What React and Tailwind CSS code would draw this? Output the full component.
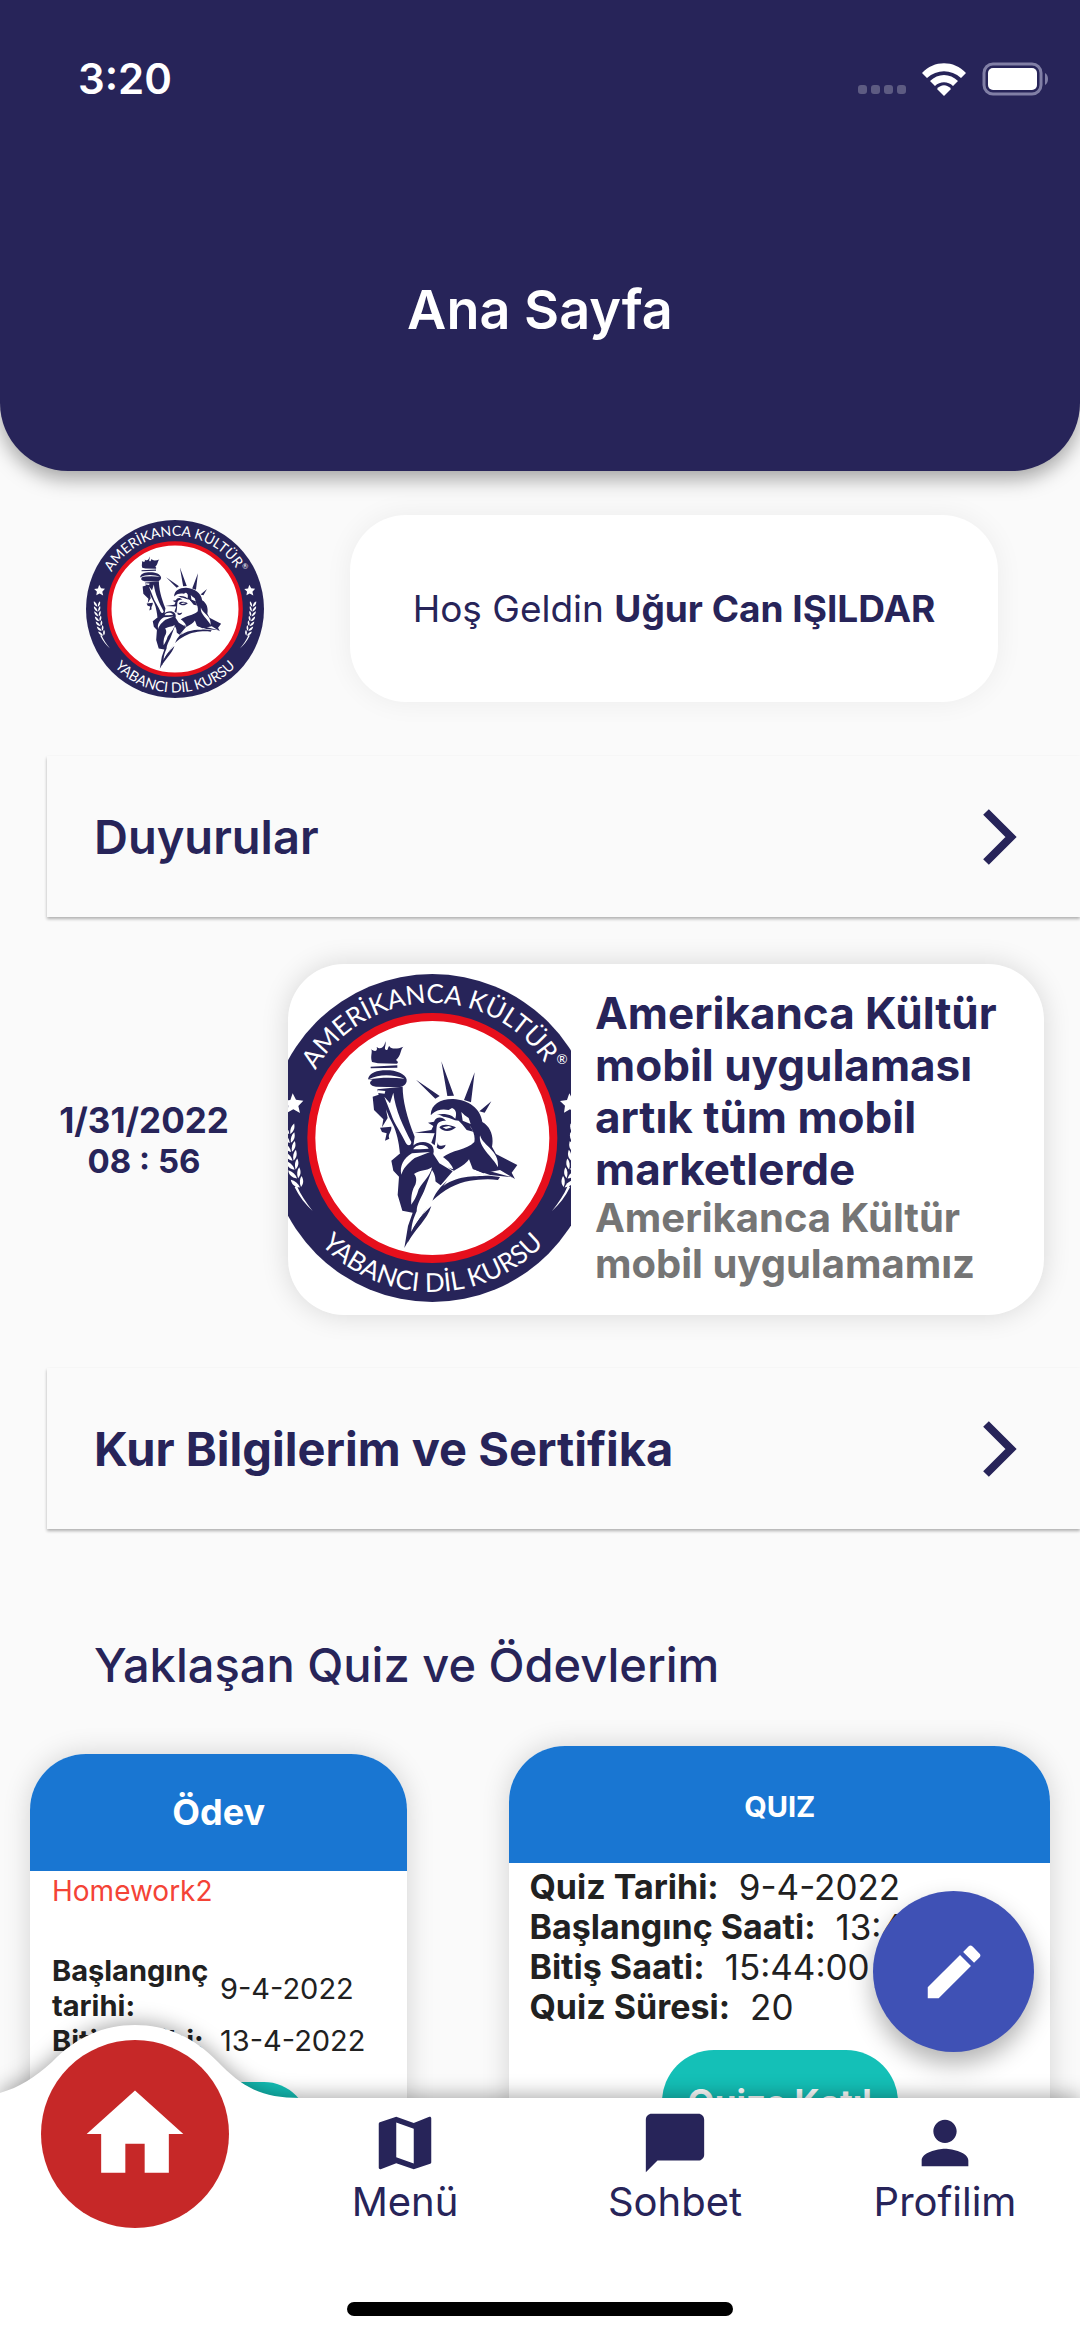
import React from 'react';
import { MdHome, MdMap, MdChatBubble, MdPerson, MdEdit } from 'react-icons/md';

const NAVY = '#272459';

const homework = {
  title: 'Homework2',
  rows: [
    { label: 'Başlangınç tarihi:', value: '9-4-2022' },
    { label: 'Bitiş tarihi:', value: '13-4-2022' },
  ],
};

const quizRows = [
  { label: 'Quiz Tarihi:', value: '9-4-2022' },
  { label: 'Başlangınç Saati:', value: '13:44:00' },
  { label: 'Bitiş Saati:', value: '15:44:00' },
  { label: 'Quiz Süresi:', value: '20' },
];

const navItems = [
  { label: 'Menü', Icon: MdMap },
  { label: 'Sohbet', Icon: MdChatBubble },
  { label: 'Profilim', Icon: MdPerson },
];

function Wheat() {
  return (
    <g fill="#fff">
      {[0, 1, 2, 3, 4, 5, 6].map(i => (
        <g key={i} transform={`translate(${56 + i * i * 0.7} ${528 + i * 27}) rotate(${-4 - i * 3})`}>
          <path d="M0 24 C-16 16 -20 4 -17 -8 C-7 0 0 10 0 24Z" />
          <path d="M3 24 C3 10 8 0 17 -6 C19 8 14 18 3 24Z" />
        </g>
      ))}
      <path d="M80 706 C92 735 108 758 128 783 C106 764 88 740 74 712Z" />
    </g>
  );
}

function Emblem({ id, viewBox, className }) {
  return (
    <svg viewBox={viewBox} preserveAspectRatio="xMidYMid slice" className={className} role="img" aria-label="Amerikanca Kültür">
      <defs>
        <path id={`${id}-top`} d="M82 564 A405 405 0 0 1 892 564" />
        <path id={`${id}-bottom`} d="M25 564 A462 462 0 0 0 949 564" />
      </defs>
      <circle cx="487" cy="564" r="492" fill={NAVY} />
      <circle cx="487" cy="564" r="363" fill="#fff" stroke="#e60f1c" strokeWidth="24" />

      <g fill="#fff" fontFamily="Lato, sans-serif" textAnchor="middle">
        <text fontSize="78">
          <textPath href={`#${id}-top`} startOffset="49%">AMERİKANCA KÜLTÜR</textPath>
        </text>
        <text fontSize="78">
          <textPath href={`#${id}-bottom`} startOffset="50%">YABANCI DİL KURSU</textPath>
        </text>
        <text x="876" y="342" fontSize="40">®</text>
      </g>

      {[72, 902].map(x => (
        <path key={x} transform={`translate(${x} 460)`} fill="#fff" d="M-4 -30 L6 -11 L28 -8 L13 8 L18 29 L-2 18 L-20 28 L-17 7 L-32 -7 L-11 -10Z" />
      ))}
      <Wheat />
      <g transform="translate(974 0) scale(-1 1)"><Wheat /></g>

      {/* torch */}
      <g fill={NAVY}>
        <path d="M306 336 C300 318 308 308 304 298 C314 306 324 304 320 290 C332 302 344 290 346 274 C350 286 340 296 348 300 C356 302 352 292 358 288 C362 298 382 298 400 290 C390 300 394 316 378 330 C386 336 384 340 380 341 L324 340 L306 336Z" />
        <path d="M302 350 L382 346 L382 353 L302 355Z" />
        <path d="M294 388 C298 364 330 359 360 361 C390 364 413 378 410 394 C408 405 397 411 386 412 L318 410 C300 408 294 396 308 389Z" />
        <path d="M308 440 L326 434 L322 418 L398 410 C398 450 410 500 434 560 L428 602 L390 612 C388 590 384 560 372 530 C362 510 356 500 348 478 L353 504 L336 532 L340 508 L312 480Z" />
        <path d="M330 533 L364 530 C366 545 352 552 358 566 L345 572 L350 550 L336 546Z" />
      </g>
      <g fill="#fff">
        <path d="M296 388 C330 370 372 374 404 386 C370 382 330 382 296 388Z" />
        <path d="M343 440 L360 460 L370 428 C376 480 400 530 424 576 C424 586 414 590 408 580 C395 550 372 520 364 494Z" />
        <path d="M324 421 L346 423 L344 431 L324 429Z" />
      </g>

      {/* crown rays */}
      <path fill={NAVY} d="M438 389 L509 438 L496 446Z M514 334 L552 437 L532 438Z M614 367 L603 457 L582 450Z M664 454 L644 488 L628 484Z" />

      {/* head and hair */}
      <path fill={NAVY} d="M482 494 C484 462 512 446 550 447 C595 450 632 475 637 516 C662 530 672 560 666 590 L678 612 L742 645 L725 668 L735 687 L690 660 L640 670 L608 656 L597 628 C585 645 572 650 552 662 C536 660 528 640 518 622 C545 600 590 600 613 576 C616 556 610 545 602 530 C588 530 578 524 566 512 C552 512 535 500 520 500 C505 492 495 490 482 494Z" />
      <path fill={NAVY} d="M474 518 L492 515 C498 500 515 498 528 512 C512 512 502 516 500 530 C498 545 500 560 494 586 L484 578 L494 550 L434 548 L484 540 L490 528Z" />
      <path fill={NAVY} d="M508 532 C520 520 538 524 558 532 C544 546 520 548 508 532Z M504 576 C502 590 512 588 527 584 C524 598 508 602 500 592Z M562 505 C585 510 600 526 610 545 L590 540Z" />
      <g fill="#fff">
        <path d="M486 492 C500 478 520 476 536 480 L546 474 C560 478 560 494 556 506 L546 498 C526 490 505 490 486 500Z" />
        <path d="M574 486 L584 496 L596 504 L602 522 L578 512Z" />
        <path d="M518 532 L536 528 L546 532 L528 537Z" />
        <path d="M630 556 C640 590 688 600 684 652 C668 620 624 592 630 556Z" />
        <path d="M498 610 C520 620 542 636 550 658 C528 652 506 640 498 610Z" />
      </g>

      {/* robe */}
      <path fill={NAVY} d="M388 612 L440 580 C470 568 498 585 490 612 L508 640 L548 664 L512 706 L490 690 L462 735 L482 752 L448 812 L403 894 L414 828 L428 788 L397 782 L383 735 L387 680 L370 662 L364 632Z" />
      <path fill={NAVY} d="M545 684 C580 670 620 672 690 681 L684 690 C650 684 622 690 600 692 C560 698 520 720 487 752 C500 720 520 700 545 684Z" />
      <path fill={NAVY} d="M606 656 L660 664 L728 682 L660 675Z" />
      <g fill="#fff">
        <path d="M430 598 C436 582 468 580 476 596 L450 598Z" />
        <path d="M426 610 L480 606 L434 624 C410 644 400 655 394 674 C388 650 400 625 426 610Z" />
        <path d="M432 672 C448 660 468 664 486 652 C480 680 462 690 446 718 C440 740 432 752 424 764 C422 736 428 716 436 704 C440 692 440 680 432 672Z" />
        <path d="M486 660 C500 680 500 700 486 752 C466 784 446 806 424 846 C424 822 432 802 440 784 C440 764 452 746 462 724Z" />
        <path d="M540 680 C575 660 620 676 660 676 C620 682 570 672 520 708Z" />
      </g>
      <path fill={NAVY} d="M484 768 C470 812 440 830 412 880 C424 832 450 800 484 768Z" />
    </svg>
  );
}

function StatusBar() {
  return (
    <div className="flex items-center justify-between pl-[78px] pr-[30px] pt-12">
      <span className="text-[42px] leading-[62px] font-semibold">3:20</span>
      <div className="flex items-center gap-4">
        <div className="flex gap-1 pt-[20px]">
          {[0, 1, 2, 3].map(i => (
            <span key={i} className="size-[9px] rounded-[3px] bg-white/25" />
          ))}
        </div>
        <svg viewBox="0 0 44 33" className="h-[33px] w-[44px]" fill="#fff">
          <path d="M0 10 C12 -3 32 -3 44 10 L39 15 C29 6 15 6 5 15Z" />
          <path d="M8 18 C16 10 28 10 36 18 L31 23 C26 18 18 18 13 23Z" />
          <path d="M15 26 C19 21 25 21 29 26 L22 33Z" />
        </svg>
        <svg viewBox="0 0 68 34" className="h-[34px] w-[68px]">
          <rect x="2" y="2" width="57" height="30" rx="9" fill="none" stroke="#817fa6" strokeWidth="3" />
          <rect x="6" y="6" width="49" height="22" rx="5" fill="#fff" />
          <path d="M63 11 C67 13 67 21 63 23Z" fill="#817fa6" />
        </svg>
      </div>
    </div>
  );
}

function SectionBar({ title }) {
  return (
    <button className="ml-[47px] flex h-[161px] shrink-0 items-center justify-between bg-[#fafafa] pl-[47px] pr-[62px] text-left shadow-[0_2px_3px_rgba(0,0,0,0.3)]">
      <span className="text-[47px] leading-[56px] font-semibold">{title}</span>
      <svg viewBox="0 0 36 58" className="h-[58px] w-9" fill="none" stroke={NAVY} strokeWidth="8">
        <path d="M4 4 L29 29 L4 54" />
      </svg>
    </button>
  );
}

export default function App() {
  return (
    <div className="relative flex h-screen flex-col overflow-hidden bg-[#fafafa] font-['Inter',sans-serif] text-[#272459]">
      <header className="z-10 h-[471px] shrink-0 rounded-b-[68px] bg-[#272459] text-white shadow-[0_8px_20px_rgba(0,0,0,0.35)]">
        <StatusBar />
        <h1 className="pt-[166px] text-center text-[54px] leading-[68px] font-semibold">Ana Sayfa</h1>
      </header>

      <main className="flex min-h-0 flex-1 flex-col overflow-hidden pt-11">
        <section className="flex shrink-0 items-center">
          <div className="flex w-[350px] justify-center">
            <Emblem id="avatar" viewBox="-5 72 984 984" className="size-[178px]" />
          </div>
          <div className="flex h-[187px] w-3/5 items-center justify-center rounded-[56px] bg-white shadow-[0_0_28px_rgba(0,0,0,0.06)]">
            <p className="text-[37px] leading-[44px]">
              Hoş Geldin <strong className="font-bold">Uğur Can IŞILDAR</strong>
            </p>
          </div>
        </section>

        <div className="mt-[54px] flex shrink-0 flex-col">
          <SectionBar title="Duyurular" />
        </div>

        <section className="mt-[47px] flex shrink-0 items-center pr-9">
          <div className="w-[288px] text-center font-bold">
            <div className="text-[35px] leading-[42px]">1/31/2022</div>
            <div className="text-[33px] leading-[40px]">08 : 56</div>
          </div>
          <article className="flex h-[351px] flex-1 items-center overflow-hidden rounded-[56px] bg-white shadow-[0_0_28px_rgba(0,0,0,0.14)]">
            <Emblem id="news" viewBox="54 42 849 1053" className="h-[351px] w-[283px] shrink-0" />
            <div className="pb-[6px] pl-6 pr-6 font-bold">
              <h2 className="text-[44px] leading-[52px]">Amerikanca Kültür mobil uygulaması artık tüm mobil marketlerde</h2>
              <p className="text-[40px] leading-[46px] text-[#757575]">Amerikanca Kültür mobil uygulamamız</p>
            </div>
          </article>
        </section>

        <div className="mt-[53px] flex shrink-0 flex-col font-bold">
          <SectionBar title={<b className="font-bold">Kur Bilgilerim ve Sertifika</b>} />
        </div>

        <h2 className="mt-[108px] shrink-0 pl-[94px] text-[47px] leading-[56px] font-medium">Yaklaşan Quiz ve Ödevlerim</h2>

        <section className="mt-[53px] flex shrink-0 items-start justify-between pl-[30px] pr-[30px] text-[#212121]">
          <article className="mt-2 h-[480px] w-[37%] overflow-hidden rounded-[56px] bg-white shadow-[0_0_28px_rgba(0,0,0,0.16)]">
            <h3 className="bg-[#1976d2] text-center text-[36px] leading-[117px] font-bold text-white">Ödev</h3>
            <div className="px-[22px]">
              <p className="text-[28px] leading-[40px] text-[#f44336]">{homework.title}</p>
              <table className="mt-[42px] w-full text-[29px] leading-[35px]">
                <tbody>
                  {homework.rows.map(row => (
                    <tr key={row.label}>
                      <th scope="row" className="w-[168px] text-left font-bold whitespace-normal">{row.label}</th>
                      <td>{row.value}</td>
                    </tr>
                  ))}
                </tbody>
              </table>
              <button aria-label="Ödev detayı" className="mx-auto mt-6 block h-[90px] w-[180px] rounded-full bg-[#14c0b7]" />
            </div>
          </article>

          <article className="h-[480px] w-[53%] overflow-hidden rounded-[56px] bg-white shadow-[0_0_28px_rgba(0,0,0,0.16)]">
            <h3 className="bg-[#1976d2] pt-1 text-center text-[29px] leading-[113px] font-bold text-white">QUIZ</h3>
            <dl className="px-5 pt-1 text-[35px] leading-[40px]">
              {quizRows.map(row => (
                <div key={row.label} className="flex gap-5 whitespace-nowrap">
                  <dt className="text-[34px] font-bold">{row.label}</dt>
                  <dd>{row.value}</dd>
                </div>
              ))}
            </dl>
            <button className="mx-auto mt-[23px] block h-[104px] w-[236px] rounded-full bg-[#14c0b7] text-[35px] font-bold text-white">Quize Katıl</button>
          </article>
        </section>
      </main>

      <button aria-label="Düzenle" className="absolute right-[46px] bottom-[288px] z-10 flex size-[161px] items-center justify-center rounded-full bg-[#3f51b5] text-white shadow-[0_12px_24px_rgba(0,0,0,0.3)]">
        <MdEdit className="size-[70px]" />
      </button>

      <nav className="relative z-20 flex h-[242px] shrink-0 flex-col bg-white drop-shadow-[0_-2px_10px_rgba(0,0,0,0.35)]">
        {/* raised hump behind the active tab */}
        <svg viewBox="0 0 300 75" className="absolute -top-[73px] left-0 h-[75px] w-[300px]" fill="#fff">
          <path d="M0 68 C20 62 34 53 52 37 C76 12 104 0 135 0 C166 0 194 12 218 37 C242 62 262 73 300 73 L300 75 L0 75Z" />
        </svg>
        <ul className="grid grid-cols-4">
          <li className="relative">
            <button aria-label="Ana Sayfa" className="absolute -top-[58px] left-1/2 flex size-[188px] -translate-x-1/2 items-center justify-center rounded-full bg-[#c62828] text-white">
              <MdHome className="size-[116px]" />
            </button>
          </li>
          {navItems.map(({ label, Icon }) => (
            <li key={label} className="flex justify-center">
              <button className="flex flex-col items-center pt-[10px] text-[40px] leading-[48px]">
                <Icon className="size-[70px]" />
                <span>{label}</span>
              </button>
            </li>
          ))}
        </ul>
        <div className="mx-auto mt-auto mb-6 h-[14px] w-[386px] rounded-full bg-black" />
      </nav>
    </div>
  );
}
